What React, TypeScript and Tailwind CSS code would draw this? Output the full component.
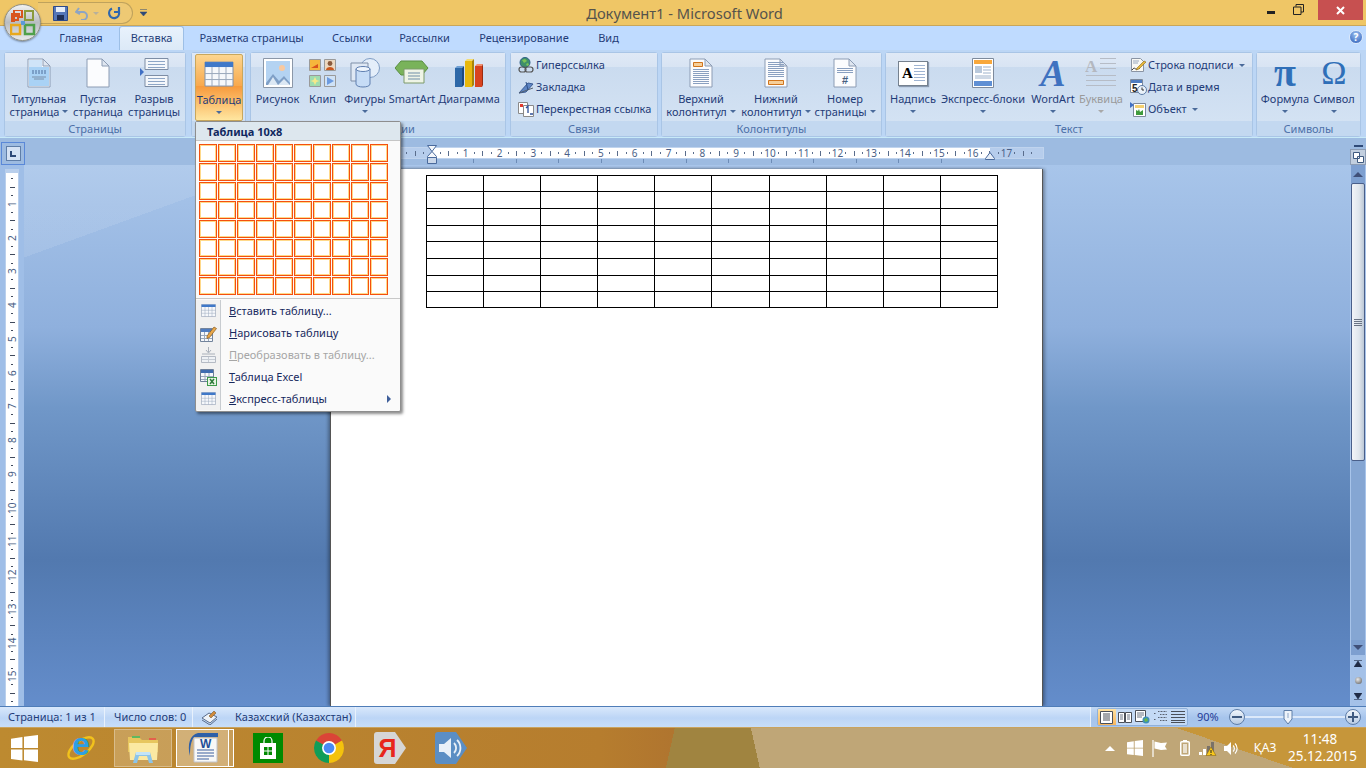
import type { ReactNode } from "react";

const FONT = "[font-family:'Noto_Sans','Open_Sans',sans-serif]";

function Arrow({ muted }: { muted?: boolean }) {
  return (
    <span
      className={`inline-block w-0 h-0 border-x-[3px] border-t-[3px] border-x-transparent ${
        muted ? "border-t-[#a8a8a8]" : "border-t-[#4a6a9a]"
      }`}
    />
  );
}

/* ---------- ribbon icons ---------- */

function Page({ children }: { children?: ReactNode }) {
  return (
    <svg width="24" height="30" viewBox="0 0 24 30">
      <path d="M1 1h15l7 7v21H1z" fill="#fbfcfe" stroke="#8c9cb4" />
      <path d="M16 1v7h7z" fill="#dfe6f0" stroke="#8c9cb4" />
      {children}
    </svg>
  );
}

function Lines({ from, to }: { from: number; to: number }) {
  const ys: number[] = [];
  for (let y = from; y <= to; y += 2) ys.push(y);
  return (
    <g stroke="#8aa0c0">
      {ys.map((y) => (
        <path key={y} d={`M4 ${y + 0.5}h16`} />
      ))}
    </g>
  );
}

function CoverIcon() {
  return (
    <Page>
      <path d="M2 9h20v19H2z" fill="#a9d2f5" />
      <path d="M2 2h13v7H2z" fill="#cfe4f8" />
      <path d="M5 13h14M5 15h14" stroke="#4f6f9c" strokeDasharray="2 1" />
      <path d="M5 19h14M7 21h10" stroke="#7b8fa8" />
    </Page>
  );
}

function BreakIcon() {
  return (
    <svg width="30" height="30" viewBox="0 0 30 30">
      <path d="M6 0.5h23v11H6zM6 17.5h23v11H6z" fill="#f4f7fb" stroke="#7d8da5" />
      <path d="M9 3.5h17M9 6.5h17M9 9.5h17M9 20.5h17M9 23.5h17M9 26.5h17" stroke="#8ea6c6" />
      <path d="M1 10l4 4-4 4z" fill="#3f6fc4" />
    </svg>
  );
}

function TableIcon({ size = 30 }: { size?: number }) {
  return (
    <svg width={size} height={size * 0.87} viewBox="0 0 30 26">
      <path d="M1 1h28v24H1z" fill="#f6f8fb" stroke="#8291a8" />
      <path d="M1 1h28v5H1z" fill="#3f78c8" />
      <path d="M1 12.5h28M1 18.5h28M8 6v19M15 6v19M22 6v19" stroke="#9aa8bc" />
    </svg>
  );
}

function PictureIcon() {
  return (
    <svg width="30" height="30" viewBox="0 0 30 30">
      <path d="M.5.5h29v29H.5z" fill="#fff" stroke="#8b97a8" />
      <path d="M3 3h24v24H3z" fill="#b4d3f2" />
      <circle cx="19" cy="10" r="3" fill="#f8c9a0" />
      <path d="M3 25l7-9 6 7 5-5 6 7v2H3z" fill="#7f9fc6" />
      <path d="M5 27l5-8 5 8zM15 27l6-6 6 6z" fill="#dce8f4" />
    </svg>
  );
}

function ClipIcon() {
  return (
    <svg width="27" height="28" viewBox="0 0 27 28">
      <path d="M.5.5h11v11H.5z" fill="#f6b73c" stroke="#9a9a9a" />
      <path d="M2 9l7-4v4z" fill="#d9531e" />
      <path d="M15.5.5h11v11h-11z" fill="#ecd8c0" stroke="#9a9a9a" />
      <circle cx="21" cy="4.5" r="2.4" fill="#8a5a3c" />
      <path d="M17 11c0-4 8-4 8 0z" fill="#c9581f" />
      <path d="M.5 16.5h11v11H.5z" fill="#9fdcb0" stroke="#9a9a9a" />
      <path d="M6 18l1.5 3 3 1-3 1-1.5 3-1.5-3-3-1 3-1z" fill="#f4e98a" />
      <path d="M15.5 16.5h11v11h-11z" fill="#cfe2f6" stroke="#9a9a9a" />
      <path d="M18 18l7 4-7 4z" fill="#6d9be0" />
    </svg>
  );
}

function ShapesIcon() {
  return (
    <svg width="30" height="30" viewBox="0 0 30 30">
      <circle cx="20" cy="10" r="9.5" fill="#e4eefa" stroke="#7f9cc4" />
      <path d="M1 5h17v18H1z" fill="#dfe8f4" stroke="#7f8fa8" />
      <path d="M6 11v15c0 4 14 4 14 0V11z" fill="#c6dcf6" stroke="#5f7fb0" />
      <ellipse cx="13" cy="11" rx="7" ry="2.5" fill="#eef5fd" stroke="#5f7fb0" />
    </svg>
  );
}

function SmartArtIcon() {
  return (
    <svg width="34" height="28" viewBox="0 0 34 28">
      <path d="M0 9l6-7h21l6 7-6 7H6z" fill="#79b35a" stroke="#5b8f42" />
      <path d="M9 10h20v14H9z" fill="#eef4e6" stroke="#7d9a6a" />
      <path d="M13 14h12M13 17h12M13 20h12" stroke="#6e8fa8" />
    </svg>
  );
}

function ChartIcon() {
  return (
    <svg width="30" height="30" viewBox="0 0 30 30">
      <path d="M1 10h7v19H1z" fill="#2d68a8" />
      <path d="M1 10l2-2h7l-2 2z" fill="#6fa0d4" />
      <path d="M8 10l2-2v19l-2 2z" fill="#1c4a80" />
      <path d="M11 3h7v26h-7z" fill="#e8b80c" />
      <path d="M11 3l2-2h7l-2 2z" fill="#f4dc70" />
      <path d="M18 3l2-2v26l-2 2z" fill="#a88408" />
      <path d="M21 8h7v21h-7z" fill="#d8431f" />
      <path d="M21 8l2-2h6l-1 2z" fill="#ef9070" />
      <path d="M28 8l1-2v21l-1 2z" fill="#9c2c10" />
    </svg>
  );
}

function HeaderIcon() {
  return (
    <Page>
      <path d="M4.5 4.5h9v4h-9z" fill="#f6cf9a" stroke="#d0741c" />
      <Lines from={11} to={26} />
    </Page>
  );
}

function FooterIcon() {
  return (
    <Page>
      <Lines from={4} to={19} />
      <path d="M4.5 22.5h15v4h-15z" fill="#f6cf9a" stroke="#d0741c" />
    </Page>
  );
}

function PageNumberIcon() {
  return (
    <Page>
      <Lines from={10} to={15} />
      <text x="12" y="26" textAnchor="middle" fontSize="11" fontWeight="700" fill="#46607f" fontFamily="Liberation Sans">
        #
      </text>
    </Page>
  );
}

function TextBoxIcon() {
  return (
    <div className="relative w-[30px] h-[25px] bg-white border border-[#75818f] shadow-[1px_1px_1px_#8a9ab0]">
      <span className="absolute left-[3px] top-[1px] text-[15px] leading-[20px] font-bold text-black [font-family:'Liberation_Serif',serif]">
        A
      </span>
      <div className="absolute right-[2px] top-[3px] w-[11px] h-[18px] bg-[repeating-linear-gradient(#9fb4d2_0,#9fb4d2_1px,transparent_1px,transparent_3px)]" />
    </div>
  );
}

function QuickPartsIcon() {
  return (
    <svg width="22" height="30" viewBox="0 0 22 30">
      <path d="M.5.5h21v29H.5z" fill="#fff" stroke="#7d8a9c" />
      <path d="M2 2h18v4H2z" fill="#f8a83c" />
      <path d="M3 8h7v7H3z" fill="#b9c9dc" />
      <path d="M11 9h8M11 12h8M11 15h8M3 18h16M3 20h16" stroke="#9db2cc" />
      <path d="M2 23h18v5H2z" fill="#5f8fd4" />
    </svg>
  );
}

function DropCapIcon() {
  return (
    <svg width="32" height="32" viewBox="0 0 32 32">
      <text x="0" y="15" fontSize="17" fontWeight="700" fill="#b4b8c0" fontFamily="Liberation Serif">
        A
      </text>
      <path d="M15 1.5h16M15 6.5h16M15 11.5h16M1 18.5h30M1 23.5h30M1 28.5h30" stroke="#b6bcc6" />
    </svg>
  );
}

function GlyphIcon({ children, className }: { children: ReactNode; className: string }) {
  return <span className={`[font-family:'Liberation_Serif',serif] leading-[30px] ${className}`}>{children}</span>;
}

/* ---------- small ribbon icons ---------- */

function LinkIcon() {
  return (
    <svg width="16" height="16" viewBox="0 0 16 16">
      <circle cx="7" cy="5.5" r="5" fill="#3f8f6a" stroke="#2d5f88" />
      <path d="M4 3l3-1 2 2-3 2zM8 7l2-1 1 2-2 1z" fill="#7cc456" />
      <rect x="1" y="10" width="7" height="5" rx="2.5" fill="none" stroke="#555" strokeWidth="1.2" />
      <rect x="7" y="10" width="8" height="5" rx="2.5" fill="none" stroke="#555" strokeWidth="1.2" />
    </svg>
  );
}

function BookmarkIcon() {
  return (
    <svg width="16" height="14" viewBox="0 0 16 14">
      <path d="M1 13L10 3l5 1-7 8z" fill="#5f86c4" stroke="#3b5c94" />
      <path d="M1 13l14-5" stroke="#54616f" />
      <path d="M8 2l2 8" stroke="#2d4f88" />
    </svg>
  );
}

function CrossRefIcon() {
  return (
    <svg width="16" height="16" viewBox="0 0 16 16">
      <path d="M.5 1.5h9v11h-9z" fill="#fff" stroke="#8a8a8a" />
      <path d="M5.5 4.5h10v11h-10z" fill="#fff" stroke="#8a8a8a" />
      <path d="M2 3h3v3H2z" fill="#e23b2e" />
      <path d="M8 7l2-2v7M12 13h3" stroke="#2d4f98" strokeWidth="1.3" fill="none" />
    </svg>
  );
}

function SignatureIcon() {
  return (
    <svg width="16" height="16" viewBox="0 0 16 16">
      <path d="M1.5 1.5h9l3 3v10h-12z" fill="#f8f8f4" stroke="#8a94a4" />
      <path d="M3 4h6M3 6h5" stroke="#98a8c0" />
      <path d="M2 13c3-4 3 0 5-1s2-1 3 0" stroke="#333" fill="none" />
      <path d="M7 11l7-7 2 1-7 7-3 1z" fill="#e6b73c" stroke="#8a6a1c" strokeWidth=".6" />
    </svg>
  );
}

function DateIcon() {
  return (
    <svg width="17" height="16" viewBox="0 0 17 16">
      <path d="M.5.5h12v13H.5z" fill="#fff" stroke="#7d8a9c" />
      <path d="M1 1h11v3H1z" fill="#4f7cc0" />
      <text x="2" y="13" fontSize="10" fontWeight="700" fill="#222" fontFamily="Liberation Sans">5</text>
      <circle cx="12" cy="11" r="4.5" fill="#eaf2fa" stroke="#5b7ba6" />
      <path d="M12 8.5V11h2" stroke="#333" fill="none" />
    </svg>
  );
}

function ObjectIcon() {
  return (
    <svg width="16" height="16" viewBox="0 0 16 16">
      <path d="M3.5 2.5h12v13h-12z" fill="#fff" stroke="#7d8a9c" />
      <path d="M5 4h9v3H5z" fill="#f4d070" />
      <path d="M6 14V9l2 1 1-2 1 3 3-2v5z" fill="#3f9a3c" />
      <path d="M0 1l4 3-4 3z" fill="#3f6fc4" />
    </svg>
  );
}

/* ---------- menu icons ---------- */

function DrawTableIcon() {
  return (
    <svg width="17" height="17" viewBox="0 0 17 17">
      <path d="M.5 3.5h12v13H.5z" fill="#f6f8fb" stroke="#73849c" />
      <path d="M1 4h11v3H1z" fill="#4f7cc0" />
      <path d="M1 10.5h11M1 13.5h11M4.5 7v9M8.5 7v9" stroke="#9aa8bc" />
      <path d="M7 11l7-9 2.5 1.5-7 9L7 13.5z" fill="#e9a84a" stroke="#8a5a1c" strokeWidth=".7" />
    </svg>
  );
}

function ConvertIcon() {
  return (
    <svg width="15" height="16" viewBox="0 0 15 16">
      <path d="M7.5 0v5M5 3l2.5 3L10 3M1 7h13" stroke="#a9b0ba" fill="none" />
      <path d="M.5 9.5h14v6H.5z" fill="#eef1f5" stroke="#b4bac4" />
      <path d="M1 12.5h13M7.5 10v5" stroke="#c6ccd4" />
    </svg>
  );
}

function ExcelTableIcon() {
  return (
    <svg width="17" height="17" viewBox="0 0 17 17">
      <path d="M.5.5h13v12H.5z" fill="#f6f8fb" stroke="#6d7f99" />
      <path d="M1 1h12v3H1z" fill="#3e6cb0" />
      <path d="M1 7.5h12M1 10.5h12M5 4v8M9 4v8" stroke="#9aa8bc" />
      <path d="M7 8h10v9H7z" fill="#3c9a4a" />
      <path d="M8 9h8v7H8z" fill="#e8f4e4" />
      <path d="M10 10l4 5M14 10l-4 5" stroke="#2d7a3a" strokeWidth="1.5" />
    </svg>
  );
}

/* ---------- ribbon pieces ---------- */

function RibbonButton({
  icon,
  lines,
  arrow,
  width,
  muted,
}: {
  icon: ReactNode;
  lines: string[];
  arrow?: "inline" | "below";
  width: string;
  muted?: boolean;
}) {
  return (
    <div className={`flex flex-col items-center h-[66px] ${width} ${muted ? "text-[#9a9a9a]" : "text-[#1f3c78]"}`}>
      <div className="flex items-center justify-center h-[38px] w-full">{icon}</div>
      <div className="text-[11px] leading-[13px] text-center whitespace-nowrap">{lines[0]}</div>
      <div className="text-[11px] leading-[13px] h-[13px] text-center whitespace-nowrap flex items-center justify-center gap-[3px]">
        {lines[1]}
        {arrow ? <Arrow muted={muted} /> : null}
      </div>
    </div>
  );
}

function SmallItem({ icon, label, arrow }: { icon: ReactNode; label: string; arrow?: boolean }) {
  return (
    <div className="flex items-center h-[22px] text-[11px] text-[#1f3c78] whitespace-nowrap">
      <span className="flex items-center justify-center w-[18px] mr-[1px]">{icon}</span>
      {label}
      {arrow ? (
        <span className="ml-[5px] flex">
          <Arrow />
        </span>
      ) : null}
    </div>
  );
}

function Group({ title, width, inner, children }: { title: string; width: string; inner: string; children: ReactNode }) {
  return (
    <div className={`flex flex-col h-[85px] rounded-[3px] border border-[#a9c5e6] shrink-0 ${width}`}>
      <div className={`flex h-[68px] pt-[1px] bg-[linear-gradient(#dfe9f6,#d8e4f3_21%,#cadbef_21%,#d3e2f3)] ${inner}`}>
        {children}
      </div>
      <div className="h-[15px] bg-[#c3d8f0] text-center text-[11px] leading-[15px] text-[#4d70a8]">{title}</div>
    </div>
  );
}

/* ---------- rulers ---------- */

function HorizontalRuler() {
  const units = Array.from({ length: 21 }, (_, i) => i - 3);
  return (
    <div className="relative w-[714px] pt-[9px]">
      <div className="h-[12px] overflow-hidden border border-[#c0d4ee] bg-[linear-gradient(to_right,#b6cdec_101px,#fff_101px,#fff_659px,#b6cdec_659px)] flex pl-[3.8px] text-[10px] leading-[10px] text-[#4a5f86]">
        {units.map((u) => (
          <div key={u} className="flex shrink-0 w-[33.8px]">
            <span className="flex items-center justify-center w-[8.45px]">
              <span className="w-px h-[2px] bg-[#5a6d8c]" />
            </span>
            <span className="flex items-center justify-center w-[8.45px]">
              <span className="w-px h-[5px] bg-[#5a6d8c]" />
            </span>
            <span className="flex items-center justify-center w-[8.45px]">
              <span className="w-px h-[2px] bg-[#5a6d8c]" />
            </span>
            <span className="flex items-center justify-center w-[8.45px]">
              {u === -1 || u === 17 ? "" : Math.abs(u + 1)}
            </span>
          </div>
        ))}
      </div>
      <div className="flex pl-[143px] h-[4px]">
        {Array.from({ length: 12 }, (_, i) => (
          <span key={i} className="w-[42.5px] border-l border-[#6d8cb6]" />
        ))}
      </div>
      {/* indent markers */}
      <svg className="absolute left-[96px] top-[7px]" width="12" height="20" viewBox="0 0 12 20">
        <path d="M1.5.5h9L6 6.5zM6 6.5l4.5 5v1h-9v-1z" fill="#f4f7fb" stroke="#4a6a9c" />
        <path d="M1.5 12.5h9v6h-9z" fill="#cbd8ea" stroke="#4a6a9c" />
      </svg>
      <svg className="absolute left-[654px] top-[14px]" width="12" height="8" viewBox="0 0 12 8">
        <path d="M6 .5l4.5 6v1h-9v-1z" fill="#e7eef7" stroke="#4a6a9c" />
      </svg>
    </div>
  );
}

function VerticalRuler() {
  return (
    <div className="ml-[5px] w-[14px] h-full overflow-hidden bg-white border-x border-[#b9cfec] text-[10px] text-[#4a5f86]">
      <div className="h-[4px] bg-[#b9cfec]" />
      <div className="pt-[1.5px]">
        {Array.from({ length: 16 }, (_, i) => (
          <div key={i} className="flex flex-col items-center">
            <span className="flex items-center justify-center h-[8.45px]">
              <span className="w-[2px] h-px bg-[#404a5c]" />
            </span>
            <span className="flex items-center justify-center h-[8.45px]">
              <span className="w-[5px] h-px bg-[#404a5c]" />
            </span>
            <span className="flex items-center justify-center h-[8.45px]">
              <span className="w-[2px] h-px bg-[#404a5c]" />
            </span>
            <span className="flex items-center justify-center h-[8.45px] -rotate-90 leading-none">
              {i < 15 ? i + 1 : ""}
            </span>
          </div>
        ))}
      </div>
    </div>
  );
}

/* ---------- taskbar icons ---------- */

function WinLogo({ size, color = "#fff" }: { size: number; color?: string }) {
  return (
    <svg width={size} height={size} viewBox="0 0 26 26" fill={color}>
      <path d="M0 3.5l11-1.5v10.500H0zM12.500 1.800L26 0v12.500H12.500zM0 14h11v10.500L0 23zM12.500 14H26v12l-13.500-1.800z" />
    </svg>
  );
}

function IeIcon() {
  return (
    <div className="relative flex items-center justify-center w-[32px] h-[32px]">
      <svg className="absolute inset-0" width="32" height="32" viewBox="0 0 32 32">
        <ellipse cx="16" cy="16" rx="15" ry="7" transform="rotate(-38 16 16)" fill="none" stroke="#f2c21c" strokeWidth="2.4" />
      </svg>
      <span className="relative text-[32px] leading-[32px] h-[32px] -mt-[8px] font-bold text-[#2c9fe4] [font-family:'Liberation_Sans',sans-serif]">
        e
      </span>
    </div>
  );
}

function FolderIcon() {
  return (
    <svg width="32" height="32" viewBox="0 0 32 32">
      <path d="M1 5h11l3 3h16v12H1z" fill="#e7c65e" />
      <path d="M5 4h8v2H5z" fill="#5fb860" />
      <path d="M22 6h7v2h-7z" fill="#e4604c" />
      <path d="M2 11h29l-1 17H3z" fill="#fbe9a2" />
      <path d="M9 20h14l3 11h-4l-2-7h-8l-2 7H6z" fill="#8cc4e8" />
      <path d="M9 20h14v3H9z" fill="#c2e4f8" />
    </svg>
  );
}

function WordIcon() {
  return (
    <svg width="32" height="32" viewBox="0 0 32 32">
      <path d="M11 1h20v4H7C4 9 3 15 3 24 0 12 3 3 11 1z" fill="#2d5fa8" />
      <path d="M7 6h23v24H7z" fill="#f8f8f6" stroke="#c0c4cc" />
      <path d="M10 18h17M10 21h17M10 24h17M10 27h12" stroke="#3a5f9e" strokeWidth="1.2" />
      <text x="13" y="16" fontSize="12" fontWeight="700" fill="#1f4f98" fontFamily="Liberation Sans">W</text>
    </svg>
  );
}

function StoreIcon() {
  return (
    <div className="flex items-center justify-center w-[30px] h-[30px] bg-[#008a00]">
      <svg width="20" height="22" viewBox="0 0 20 22">
        <path d="M6 6V4a4 4 0 018 0v2" fill="none" stroke="#fff" strokeWidth="1.2" />
        <path d="M2 6h16v16H2z" fill="#fff" />
        <path d="M6 10h3.5v3.5H6zM10.500 10H14v3.500h-3.500zM6 14.500h3.500V18H6zM10.500 14.500H14V18h-3.500z" fill="#008a00" />
      </svg>
    </div>
  );
}

function ChromeIcon() {
  return (
    <svg width="30" height="30" viewBox="0 0 28 28">
      <path d="M14 14L1.900 7A14 14 0 0126.100 7z" fill="#db4437" />
      <path d="M14 14l12.100-7A14 14 0 0114 28z" fill="#f4c20d" />
      <path d="M14 14v14A14 14 0 011.900 7z" fill="#0f9d58" />
      <circle cx="14" cy="14" r="6.5" fill="#fff" />
      <circle cx="14" cy="14" r="5" fill="#4a8af4" />
    </svg>
  );
}

function YandexIcon() {
  return (
    <div className="relative w-[32px] h-[32px] flex items-center justify-center">
      <svg className="absolute inset-0" width="32" height="32" viewBox="0 0 32 32">
        <path d="M3 0h18l11 16-11 16H3a3 3 0 01-3-3V3a3 3 0 013-3z" fill="#d6d6d6" />
      </svg>
      <span className="relative mr-[5px] text-[25px] leading-none font-bold text-[#e8261c] [font-family:'Liberation_Sans',sans-serif]">
        Я
      </span>
    </div>
  );
}

function SoundAppIcon() {
  return (
    <svg width="32" height="32" viewBox="0 0 32 32">
      <path d="M3 0h18l11 16-11 16H3a3 3 0 01-3-3V3a3 3 0 013-3z" fill="#5b8ec4" />
      <path d="M4 12h5l7-6v20l-7-6H4z" fill="#e8f0f8" />
      <path d="M19 11a7 7 0 010 10M22 8a11 11 0 010 16" fill="none" stroke="#e8f0f8" strokeWidth="1.8" />
    </svg>
  );
}

/* ---------- status bar view icons ---------- */

function ViewIcon({ kind }: { kind: number }) {
  if (kind === 1)
    return (
      <svg width="14" height="13" viewBox="0 0 14 13">
        <path d="M.5 1.5h6v10h-6zM7.500 1.500h6v10h-6z" fill="#fff" stroke="#4a4f58" />
        <path d="M2 4h3M2 6h3M2 8h3M9 4h3M9 6h3M9 8h3" stroke="#6a7484" />
      </svg>
    );
  if (kind === 2)
    return (
      <svg width="15" height="14" viewBox="0 0 15 14">
        <path d="M.5.5h10v11H.5z" fill="#fff" stroke="#4a4f58" />
        <path d="M2 3h7M2 5h7M2 7h5" stroke="#6a7484" />
        <circle cx="11" cy="10" r="3.5" fill="#3d8fb8" />
        <path d="M9 9l3-1 1 3-3 1z" fill="#6ab84a" />
      </svg>
    );
  if (kind === 3)
    return (
      <svg width="13" height="12" viewBox="0 0 13 12">
        <path d="M4 .5h9M6 3.500h7M4 6.500h9M6 9.500h7M0 2.500h2M0 8.500h2" stroke="#5a6270" strokeDasharray="1 .5" />
      </svg>
    );
  if (kind === 4)
    return (
      <svg width="14" height="12" viewBox="0 0 14 12">
        <path d="M0 .5h14M0 3.500h14M0 6.500h14M0 9.500h14M0 11.500h14" stroke="#4a4f58" />
      </svg>
    );
  return (
    <svg width="13" height="13" viewBox="0 0 13 13">
      <path d="M.5.5h12v12H.5z" fill="#fff" stroke="#4a4f58" />
      <path d="M3 3h7M3 5h7M3 7h7M3 9h7" stroke="#4a4f58" />
    </svg>
  );
}

function RoundButton({ plus }: { plus?: boolean }) {
  return (
    <span className="flex items-center justify-center w-[16px] h-[16px] rounded-full border border-[#5f7ea8] bg-[linear-gradient(#f0f5fb,#b7cbe4)] shrink-0">
      <svg width="10" height="10" viewBox="0 0 10 10">
        <path d={plus ? "M0 5h10M5 0v10" : "M0 5h10"} stroke="#3f5a80" strokeWidth="2" />
      </svg>
    </span>
  );
}

const MENU_ITEMS = [
  { first: "В", rest: "ставить таблицу...", icon: <TableIcon size={15} /> },
  { first: "Н", rest: "арисовать таблицу", icon: <DrawTableIcon /> },
  { first: "П", rest: "реобразовать в таблицу...", icon: <ConvertIcon />, off: true },
  { first: "Т", rest: "аблица Excel", icon: <ExcelTableIcon /> },
  { first: "Э", rest: "кспресс-таблицы", icon: <TableIcon size={15} />, more: true },
];

const ROWS = [0, 1, 2, 3, 4, 5, 6, 7];
const COLS = [0, 1, 2, 3, 4, 5, 6, 7, 8, 9];
const ROW_HEIGHTS = ["h-[16px]", "h-[17px]", "h-[17px]", "h-[16px]", "h-[17px]", "h-[17px]", "h-[16px]", "h-[16px]"];

function TableMenu() {
  return (
    <div className="absolute left-[195px] top-[121px] w-[206px] h-[291px] bg-[#fafafa] border border-[#8e8e8e] rounded-[2px] shadow-[2px_2px_3px_rgba(0,0,0,0.45)] z-10">
      <div className="h-[19px] bg-[#dde7ee] border-b border-[#c5c5c5] pl-[11px] text-[11px] leading-[20px] font-bold text-[#10285f]">
        Таблица 10х8
      </div>
      <div className="flex flex-col gap-px pl-[3px] pt-[3px]">
        {ROWS.map((r) => (
          <div key={r} className="flex gap-px">
            {COLS.map((c) => (
              <div
                key={c}
                className="w-[18px] h-[18px] border border-[#f4500f] bg-white shadow-[inset_0_0_0_1px_#ffd98a]"
              />
            ))}
          </div>
        ))}
      </div>
      <div className="mt-[3px] h-px bg-[#c8c8c8]" />
      <div className="flex flex-col pt-px">
        {MENU_ITEMS.map((item) => (
          <div
            key={item.first}
            className={`flex items-center h-[22px] text-[11px] whitespace-nowrap ${
              item.off ? "text-[#a6a6a6]" : "text-[#17295e]"
            }`}
          >
            <span className="flex items-center justify-center w-[25px] h-full border-r border-[#c8ccd0] bg-[#f1f1f1] shrink-0">
              {item.icon}
            </span>
            <span className="ml-[8px]">
              <span className="underline">{item.first}</span>
              {item.rest}
            </span>
            {item.more ? (
              <span className="ml-auto mr-[9px] w-0 h-0 border-y-[4px] border-l-[4px] border-y-transparent border-l-[#3f5f9a]" />
            ) : null}
          </div>
        ))}
      </div>
    </div>
  );
}

export default function App() {
  return (
    <div className={`relative w-[1366px] h-[768px] overflow-hidden flex flex-col ${FONT}`}>
      {/* Title bar */}
      <div className="flex items-start h-[26px] shrink-0 bg-[#efc666] border-b border-[#c9a65a]">
        <div className="flex-1 basis-0 pt-[2px] flex items-center">
          <div className="ml-[38px] w-[95px] h-[22px] flex items-center pl-[15px] gap-[7px] rounded-r-full border border-l-0 border-[#bfa25c] bg-[#eec974]">
            <svg width="15" height="15" viewBox="0 0 15 15">
              <path d="M.5.5h14v14H.5z" fill="#5577b8" stroke="#2f4a88" />
              <path d="M3 1h9v5H3z" fill="#e6edf8" />
              <path d="M4 9h7v5H4z" fill="#1f2f55" />
            </svg>
            <svg width="14" height="13" viewBox="0 0 14 13">
              <path d="M4 1L1 5l4 2M1.5 5H8a4 4 0 010 8H6" fill="none" stroke="#8da4c4" strokeWidth="2" />
            </svg>
            <span className="mx-[-3px]">
              <span className="flex w-0 h-0 border-x-[3px] border-t-[3px] border-x-transparent border-t-[#b8b09a]" />
            </span>
            <svg className="ml-[4px]" width="15" height="14" viewBox="0 0 15 14">
              <path d="M5 2.5A5 5 0 1012 6M12 1v5H7" fill="none" stroke="#2f67ad" strokeWidth="2.2" />
            </svg>
          </div>
          <svg className="ml-[7px]" width="7" height="8" viewBox="0 0 7 8">
            <path d="M0 .5h7M0 3h7l-3.5 4z" fill="#2f4a78" stroke="#2f4a78" strokeWidth=".5" />
          </svg>
        </div>
        <div className="ml-[6px] text-[14.7px] leading-[27px] text-[#55534c] whitespace-nowrap">
          Документ1 - Microsoft Word
        </div>
        <div className="flex-1 basis-0 flex justify-end items-start pr-[3px]">
          <svg className="mt-[11px] mr-[18px]" width="8" height="3" viewBox="0 0 8 3">
            <path d="M0 0h8v3H0z" fill="#222" />
          </svg>
          <svg className="mt-[4px] mr-[14px]" width="11" height="11" viewBox="0 0 11 11">
            <path d="M3 2.5V.5h7.5V8H8M.5 3h7.5v7.5H.5z" fill="none" stroke="#222" />
          </svg>
          <div className="flex items-center justify-center w-[45px] h-[20px] bg-[#c75050]">
            <svg width="9" height="9" viewBox="0 0 9 9">
              <path d="M1 1l7 7M8 1L1 8" stroke="#fff" strokeWidth="2" />
            </svg>
          </div>
        </div>
      </div>

      {/* Tabs */}
      <div className="flex items-end h-[24px] shrink-0 bg-[#bfdbff] pl-[47px] text-[11px] text-[#1f3c78] text-center">
        <div className="w-[68px] h-[23px] leading-[22px]">Главная</div>
        <div className="ml-[4px] w-[65px] h-[24px] leading-[22px] rounded-t-[3px] border border-b-0 border-[#9dbfe6] bg-[linear-gradient(#e8f2fc,#dce9f7)]">
          Вставка
        </div>
        <div className="w-[135px] h-[23px] leading-[22px]">Разметка страницы</div>
        <div className="w-[66px] h-[23px] leading-[22px]">Ссылки</div>
        <div className="w-[79px] h-[23px] leading-[22px]">Рассылки</div>
        <div className="w-[120px] h-[23px] leading-[22px]">Рецензирование</div>
        <div className="w-[49px] h-[23px] leading-[22px]">Вид</div>
        <div className="ml-auto mr-[3px] mb-[6px] flex items-center justify-center w-[14px] h-[14px] rounded-full bg-[radial-gradient(circle_at_50%_30%,#9cc0f0,#2a5cb8)] border border-[#dce9fa] text-[10px] leading-none font-bold text-white">
          ?
        </div>
      </div>

      {/* Ribbon */}
      <div className="flex h-[88px] shrink-0 pt-[2px] pl-[4px] bg-[#bcd6f5] border-b border-[#c8eaf8]">
        <Group title="Страницы" width="w-[182px]" inner="pl-[1px]">
          <RibbonButton width="w-[66px]" icon={<CoverIcon />} lines={["Титульная", "страница"]} arrow="inline" />
          <RibbonButton width="w-[52px]" icon={<Page />} lines={["Пустая", "страница"]} />
          <RibbonButton width="w-[60px]" icon={<BreakIcon />} lines={["Разрыв", "страницы"]} />
        </Group>
        <div className="ml-[5px]">
          <Group title="Таблицы" width="w-[55px]" inner="pl-[3px]">
            <div className="rounded-[2px] border border-[#c9a75c] bg-[linear-gradient(#fdd68f,#f8a84c_48%,#f79a3c_48%,#ffe6a0)]">
              <RibbonButton width="w-[46px]" icon={<TableIcon />} lines={["Таблица", ""]} arrow="below" />
            </div>
          </Group>
        </div>
        <div className="ml-[4px]">
          <Group title="Иллюстрации" width="w-[256px]" inner="pl-[4px]">
            <RibbonButton width="w-[45px]" icon={<PictureIcon />} lines={["Рисунок", ""]} />
            <RibbonButton width="w-[45px]" icon={<ClipIcon />} lines={["Клип", ""]} />
            <RibbonButton width="w-[40px]" icon={<ShapesIcon />} lines={["Фигуры", ""]} arrow="below" />
            <RibbonButton width="w-[54px]" icon={<SmartArtIcon />} lines={["SmartArt", ""]} />
            <RibbonButton width="w-[60px]" icon={<ChartIcon />} lines={["Диаграмма", ""]} />
          </Group>
        </div>
        <div className="ml-[4px]">
          <Group title="Связи" width="w-[148px]" inner="flex-col pl-[6px]">
            <SmallItem icon={<LinkIcon />} label="Гиперссылка" />
            <SmallItem icon={<BookmarkIcon />} label="Закладка" />
            <SmallItem icon={<CrossRefIcon />} label="Перекрестная ссылка" />
          </Group>
        </div>
        <div className="ml-[3px]">
          <Group title="Колонтитулы" width="w-[221px]" inner="pl-[3px]">
            <RibbonButton width="w-[72px]" icon={<HeaderIcon />} lines={["Верхний", "колонтитул"]} arrow="inline" />
            <RibbonButton width="w-[78px]" icon={<FooterIcon />} lines={["Нижний", "колонтитул"]} arrow="inline" />
            <RibbonButton width="w-[60px]" icon={<PageNumberIcon />} lines={["Номер", "страницы"]} arrow="inline" />
          </Group>
        </div>
        <div className="ml-[3px]">
          <Group title="Текст" width="w-[368px]" inner="pl-[3px]">
            <RibbonButton width="w-[48px]" icon={<TextBoxIcon />} lines={["Надпись", ""]} arrow="below" />
            <RibbonButton width="w-[92px]" icon={<QuickPartsIcon />} lines={["Экспресс-блоки", ""]} arrow="below" />
            <RibbonButton
              width="w-[48px]"
              icon={<GlyphIcon className="text-[38px] italic font-bold text-[#3f72c0]">A</GlyphIcon>}
              lines={["WordArt", ""]}
              arrow="below"
            />
            <RibbonButton width="w-[48px]" icon={<DropCapIcon />} lines={["Буквица", ""]} arrow="below" muted />
            <div className="flex flex-col ml-[4px]">
              <SmallItem icon={<SignatureIcon />} label="Строка подписи" arrow />
              <SmallItem icon={<DateIcon />} label="Дата и время" />
              <SmallItem icon={<ObjectIcon />} label="Объект" arrow />
            </div>
          </Group>
        </div>
        <div className="ml-[3px]">
          <Group title="Символы" width="w-[105px]" inner="pl-[3px]">
            <RibbonButton
              width="w-[50px]"
              icon={<GlyphIcon className="text-[40px] font-bold text-[#2f6fb8]">π</GlyphIcon>}
              lines={["Формула", ""]}
              arrow="below"
            />
            <RibbonButton
              width="w-[48px]"
              icon={<GlyphIcon className="text-[34px] text-[#2f6fb8]">Ω</GlyphIcon>}
              lines={["Символ", ""]}
              arrow="below"
            />
          </Group>
        </div>
      </div>

      {/* Ruler row */}
      <div className="flex h-[27px] shrink-0 bg-[#9dbbe1]">
        <div className="mt-[4px] ml-[1px] w-[24px] h-[23px] border border-[#5a88d8] flex items-center justify-center">
          <div className="flex items-center justify-center w-[15px] h-[15px] bg-[#d5e2f4] border border-[#5f7ea8]">
            <span className="w-[6px] h-[6px] border-l-2 border-b-2 border-[#2f4a78]" />
          </div>
        </div>
        <div className="ml-[305px]">
          <HorizontalRuler />
        </div>
        <div className="ml-auto w-[16px] flex flex-col items-center pt-[7px]">
          <span className="w-[9px] h-[2px] bg-[#2f4a78]" />
          <div className="mt-[2px] flex items-center justify-center w-[16px] h-[16px] bg-[#c2cfdf] border border-[#8c9cb4]">
            <svg width="11" height="11" viewBox="0 0 11 11">
              <path d="M.5.5h6v6h-6zM4.5 4.5h6v6h-6z" fill="#fff" stroke="#3f5a80" />
            </svg>
          </div>
        </div>
      </div>

      {/* Workspace */}
      <div className="flex h-[541px] shrink-0">
        <div className="w-[24px] pt-[4px] bg-[#9fbee7] shrink-0">
          <VerticalRuler />
        </div>
        <div className="flex-1 pl-[306px] pt-[4px] bg-[linear-gradient(160deg,rgba(255,255,255,0.1)_87px,transparent_87px),linear-gradient(#a8c5ea_0%,#8fb0dd_30%,#7097c8_45%,#5279af_73%,#648dcb_100%)]">
          <div className="w-[713px] h-full bg-white border-x border-[#555] shadow-[-2px_0_3px_rgba(0,0,0,0.3),2px_0_3px_rgba(0,0,0,0.3)] pl-[95px] pt-[6px]">
            <table className="table-fixed border-collapse w-[572px]">
              <tbody>
                {ROWS.map((r) => (
                  <tr key={r} className={ROW_HEIGHTS[r]}>
                    {COLS.map((c) => (
                      <td key={c} className="border border-black p-0" />
                    ))}
                  </tr>
                ))}
              </tbody>
            </table>
          </div>
        </div>
        {/* Scrollbar */}
        <div className="w-[16px] shrink-0 flex flex-col bg-[#85a6d3] border-x border-[#a8c4ea]">
          <div className="flex items-center justify-center h-[18px] bg-[#7d9fd0]">
            <span className="w-0 h-0 border-x-[5px] border-b-[5px] border-x-transparent border-b-[#3f4f78]" />
          </div>
          <div className="flex flex-col items-center justify-center gap-px h-[278px] bg-[linear-gradient(to_right,#f2f4f8,#dfe5ec_60%,#bcc8d6)] border border-[#4a5f8a] rounded-[2px]">
            <span className="w-[8px] h-px bg-[#6a7484]" />
            <span className="w-[8px] h-px bg-[#6a7484]" />
            <span className="w-[8px] h-px bg-[#6a7484]" />
            <span className="w-[8px] h-px bg-[#6a7484]" />
          </div>
          <div className="flex-1" />
          <div className="flex items-center justify-center h-[15px] bg-[#7d9fd0]">
            <span className="w-0 h-0 border-x-[5px] border-t-[5px] border-x-transparent border-t-[#3f4f78]" />
          </div>
          <div className="h-[51px] bg-[#a4c1e8] flex flex-col items-center justify-between pt-[5px] pb-[6px]">
            <svg width="8" height="7" viewBox="0 0 8 7">
              <path d="M0 .5h8M4 1L0 7h8z" fill="#1f2a44" stroke="#1f2a44" strokeWidth=".6" />
            </svg>
            <span className="w-[7px] h-[7px] rounded-full bg-[radial-gradient(circle_at_40%_35%,#e8e8e8,#555)]" />
            <svg width="8" height="7" viewBox="0 0 8 7">
              <path d="M0 6.5h8M4 6L0 0h8z" fill="#1f2a44" stroke="#1f2a44" strokeWidth=".6" />
            </svg>
          </div>
        </div>
      </div>

      {/* Status bar */}
      <div className="flex h-[21px] shrink-0 border-t border-[#4f7db8] bg-[linear-gradient(#d9e8fb,#bcd5f6_55%,#c8def9)] text-[11px] leading-[20px] text-[#1f3c78]">
        <div className="w-[105px] pl-[8px] border-r border-[#e8f1fc] whitespace-nowrap">Страница: 1 из 1</div>
        <div className="w-[88px] pl-[9px] border-r border-[#e8f1fc] whitespace-nowrap">Число слов: 0</div>
        <div className="w-[163px] pl-[8px] flex items-center border-r border-[#e8f1fc]">
          <svg width="17" height="15" viewBox="0 0 17 15">
            <path d="M1 8l7-5 8 4-7 6z" fill="#eef2f8" stroke="#5a6d8c" />
            <path d="M1 10l8 5 7-6" fill="none" stroke="#5a6d8c" />
            <path d="M8 6l5-5 2 2-5 5z" fill="#d08a3c" stroke="#7a5a2c" strokeWidth=".6" />
          </svg>
          <span className="ml-[17px] whitespace-nowrap">Казахский (Казахстан)</span>
        </div>
        <div className="ml-[734px] flex-1 flex items-center border-l border-[#e8f1fc] bg-[linear-gradient(#c2d8f4,#a6c4ec_55%,#a9c7ee)] pl-[6px]">
          <div className="flex h-[18px] w-[91px] rounded-[2px] border border-[#8fb0da] bg-[#c4daf5] overflow-hidden shrink-0">
            {[0, 1, 2, 3, 4].map((k) => (
              <span
                key={k}
                className={`flex items-center justify-center flex-1 ${
                  k === 0 ? "bg-[linear-gradient(#fde2a4,#f9b65c)]" : ""
                }`}
              >
                <ViewIcon kind={k} />
              </span>
            ))}
          </div>
          <span className="ml-[9px] w-[21px] text-[#1f3c98]">90%</span>
          <span className="ml-[11px]">
            <RoundButton />
          </span>
          <div className="relative w-[100px] h-[2px] bg-[#e6f0fb] border-y border-[#dce9fa]">
            <svg className="absolute left-[38px] -top-[7px]" width="10" height="15" viewBox="0 0 10 15">
              <path d="M1 .5h8V9l-4 5-4-5z" fill="#eef3fa" stroke="#5f7ea8" />
              <path d="M5 3v5" stroke="#8fa6c6" />
            </svg>
          </div>
          <RoundButton plus />
        </div>
      </div>

      {/* Taskbar */}
      <div className="flex items-center h-[41px] shrink-0 border-t border-[#c9a35f] bg-[linear-gradient(19deg,transparent_421px,#c6963a_421px),linear-gradient(77.6deg,transparent_742px,#bfa677_742px),linear-gradient(102.4deg,transparent_659px,#a08440_659px),linear-gradient(to_right,#bd8a30_0,#b67d2e_600px,#b0752f_672px)]">
        <div className="w-[48px] flex justify-center">
          <WinLogo size={27} />
        </div>
        <div className="w-[66px] flex justify-center">
          <IeIcon />
        </div>
        <div className="w-[58px] h-[38px] flex items-center justify-center bg-white/20 border border-white/30">
          <FolderIcon />
        </div>
        <div className="ml-[4px] w-[53px] h-[38px] flex items-center justify-center bg-white/35 border border-white">
          <WordIcon />
        </div>
        <div className="w-[5px] h-[38px] border-y border-r border-white bg-white/20" />
        <div className="w-[68px] flex justify-center">
          <StoreIcon />
        </div>
        <div className="w-[54px] flex justify-center">
          <ChromeIcon />
        </div>
        <div className="w-[68px] flex justify-center">
          <YandexIcon />
        </div>
        <div className="w-[54px] flex justify-center">
          <SoundAppIcon />
        </div>
        <div className="ml-[620px] flex items-center text-white">
          <div className="w-[24px] flex justify-center">
            <span className="w-0 h-0 border-x-[5px] border-b-[5px] border-x-transparent border-b-white" />
          </div>
          <div className="w-[26px] flex justify-center">
            <WinLogo size={16} />
          </div>
          <div className="w-[24px] flex justify-center">
            <svg width="16" height="17" viewBox="0 0 16 17">
              <path d="M1 0v17" stroke="#fff" strokeWidth="1.2" />
              <path d="M2.5 1.5L9 3l6-.5-2 4 2 3-6 .5-6.500-1.500z" fill="#fff" />
            </svg>
          </div>
          <div className="w-[26px] flex justify-center">
            <svg width="10" height="16" viewBox="0 0 10 16">
              <path d="M3 0h4v2H3z" fill="#fff" />
              <rect x=".75" y="1.75" width="8.5" height="13.5" rx="1" fill="none" stroke="#fff" strokeWidth="1.5" />
              <path d="M3 4h4v9H3z" fill="#fff" fillOpacity=".65" />
            </svg>
          </div>
          <div className="w-[20px] flex justify-center">
            <svg width="18" height="16" viewBox="0 0 18 16">
              <path d="M0 12h3v3H0zM4 9h3v6H4z" fill="#fff" />
              <path d="M8 6h3v9H8zM12 2h3v13h-3z" fill="#7a7268" />
              <path d="M12 7l5 8.5H7z" fill="#f8c81c" stroke="#7a5a10" strokeWidth=".5" />
              <path d="M12 10v3M12 14v1" stroke="#222" />
            </svg>
          </div>
          <div className="w-[24px] flex justify-center">
            <svg width="15" height="15" viewBox="0 0 15 15">
              <path d="M1 5h3l4-4v13l-4-4H1z" fill="#fff" />
              <path d="M10 4.5a4 4 0 010 6M12 2.5a7 7 0 010 10" fill="none" stroke="#fff" strokeWidth="1.2" />
            </svg>
          </div>
          <div className="w-[46px] text-center text-[12px]">ҚАЗ</div>
          <div className="w-[64px] text-center text-[13.5px] leading-[17px] whitespace-nowrap">
            <div>11:48</div>
            <div>25.12.2015</div>
          </div>
        </div>
      </div>

      {/* Office button */}
      <div className="absolute left-[4px] top-[4px] w-[37px] h-[37px] rounded-full flex items-center justify-center bg-[linear-gradient(#f2f2f2,#b9bdc2_50%,#e6e8ea)] border border-[#8f8f84] shadow-[0_1px_2px_rgba(0,0,0,0.4)] z-10">
        <svg width="26" height="26" viewBox="0 0 26 26">
          <path d="M1 3h9v4H5v5H1z" fill="#d8541e" />
          <path d="M4 0h8v7H8v3H4z" fill="none" stroke="#d8541e" strokeWidth="2" />
          <path d="M15 1h8v9h-8z" fill="none" stroke="#8a9a3c" strokeWidth="2" />
          <path d="M1 15h9v9H1z" fill="none" stroke="#e8a81c" strokeWidth="2.5" />
          <path d="M15 15h9v9h-9z" fill="none" stroke="#4fa04a" strokeWidth="2.5" />
          <path d="M11 11h4v4h-4z" fill="#5b9ad8" />
        </svg>
      </div>

      <TableMenu />
    </div>
  );
}
